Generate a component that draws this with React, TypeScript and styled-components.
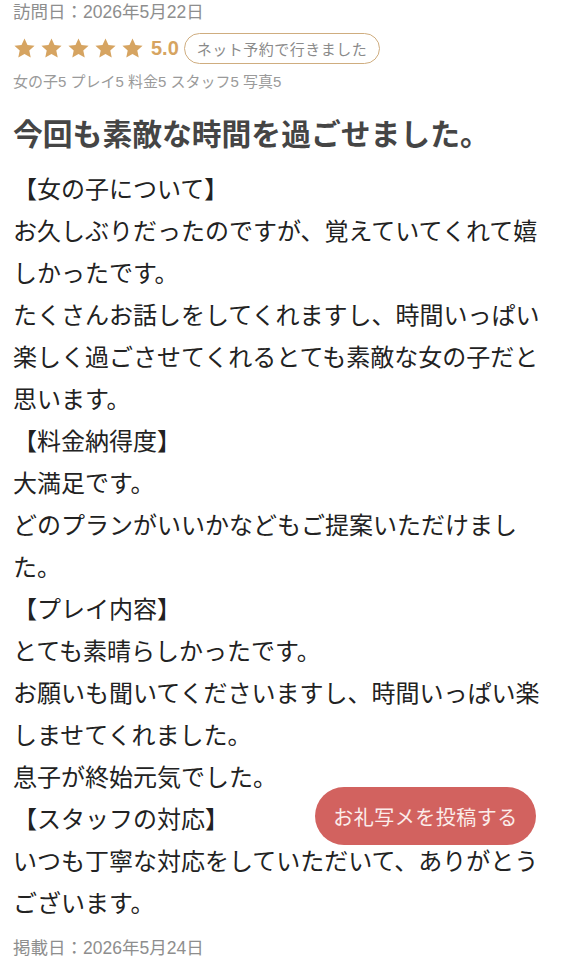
import styled, { createGlobalStyle } from "styled-components";

const GlobalStyle = createGlobalStyle`
    html, body {
        margin: 0;
        padding: 0;
        background: #ffffff;
    }
    body {
        font-family: "Noto Sans CJK JP", "Noto Sans", sans-serif;
    }
`;

const Page = styled.div`
    width: 566px;
    padding: 0 13px;
    box-sizing: border-box;
    display: flex;
    flex-direction: column;
`;

const DateText = styled.div`
    font-family: "Liberation Sans", "Noto Sans CJK JP", sans-serif;
    font-size: 17.5px;
    line-height: 24px;
    color: #8e8e8e;
`;

const RatingRow = styled.div`
    display: flex;
    align-items: center;
    height: 32px;
    margin-top: 8px;
`;

const Stars = styled.div`
    display: flex;
    gap: 4px;
`;

const Score = styled.span`
    font-family: "Liberation Sans", sans-serif;
    font-weight: 700;
    font-size: 20px;
    color: #d6a461;
    margin-left: 7px;
`;

const Pill = styled.span`
    margin-left: 5px;
    height: 31px;
    box-sizing: border-box;
    padding: 0 12px;
    border: 1.5px solid #cfad7f;
    border-radius: 16px;
    display: flex;
    align-items: center;
    font-size: 15px;
    color: #8a8a8a;
    letter-spacing: 0.5px;
`;

const Scores = styled.div`
    font-family: "Liberation Sans", "Noto Sans CJK JP", sans-serif;
    font-size: 15px;
    line-height: 20px;
    color: #9a9a9a;
    margin-top: 8px;
`;

const Title = styled.h1`
    margin: 20px 0 0;
    font-size: 29.8px;
    line-height: 40px;
    font-weight: 700;
    color: #454545;
`;

const Body = styled.div`
    margin-top: 15px;
    font-size: 24px;
    line-height: 42px;
    color: #222222;
`;

const Line = styled.p`
    margin: 0;
`;

const Posted = styled(DateText)`
    margin-top: 13px;
`;

const PhotoButton = styled.button`
    position: fixed;
    right: 30px;
    bottom: 115px;
    width: 221px;
    height: 58px;
    border: none;
    border-radius: 29px;
    background: #d2625f;
    color: #fbecea;
    font-family: "Noto Sans CJK JP", sans-serif;
    font-size: 20px;
    letter-spacing: 0.5px;
    cursor: pointer;
`;

function Star() {
    return (
        <svg width="23" height="23" viewBox="0 0 24 24">
            <polygon
                points="12,1.5 15.1,8.3 22.5,9.1 17,14.1 18.5,21.5 12,17.8 5.5,21.5 7,14.1 1.5,9.1 8.9,8.3"
                fill="#d6a461"
            />
        </svg>
    );
}

const lines: string[] = [
    "【女の子について】",
    "お久しぶりだったのですが、覚えていてくれて嬉しかったです。",
    "たくさんお話しをしてくれますし、時間いっぱい楽しく過ごさせてくれるとても素敵な女の子だと思います。",
    "【料金納得度】",
    "大満足です。",
    "どのプランがいいかなどもご提案いただけました。",
    "【プレイ内容】",
    "とても素晴らしかったです。",
    "お願いも聞いてくださいますし、時間いっぱい楽しませてくれました。",
    "息子が終始元気でした。",
    "【スタッフの対応】",
    "いつも丁寧な対応をしていただいて、ありがとうございます。",
];

export default function App() {
    return (
        <>
            <GlobalStyle />
            <Page>
                <DateText>訪問日：2026年5月22日</DateText>
                <RatingRow>
                    <Stars>
                        {[0, 1, 2, 3, 4].map((i) => (
                            <Star key={i} />
                        ))}
                    </Stars>
                    <Score>5.0</Score>
                    <Pill>ネット予約で行きました</Pill>
                </RatingRow>
                <Scores>女の子5 プレイ5 料金5 スタッフ5 写真5</Scores>
                <Title>今回も素敵な時間を過ごせました。</Title>
                <Body>
                    {lines.map((text, i) => (
                        <Line key={i}>{text}</Line>
                    ))}
                </Body>
                <Posted>掲載日：2026年5月24日</Posted>
            </Page>
            <PhotoButton>お礼写メを投稿する</PhotoButton>
        </>
    );
}
